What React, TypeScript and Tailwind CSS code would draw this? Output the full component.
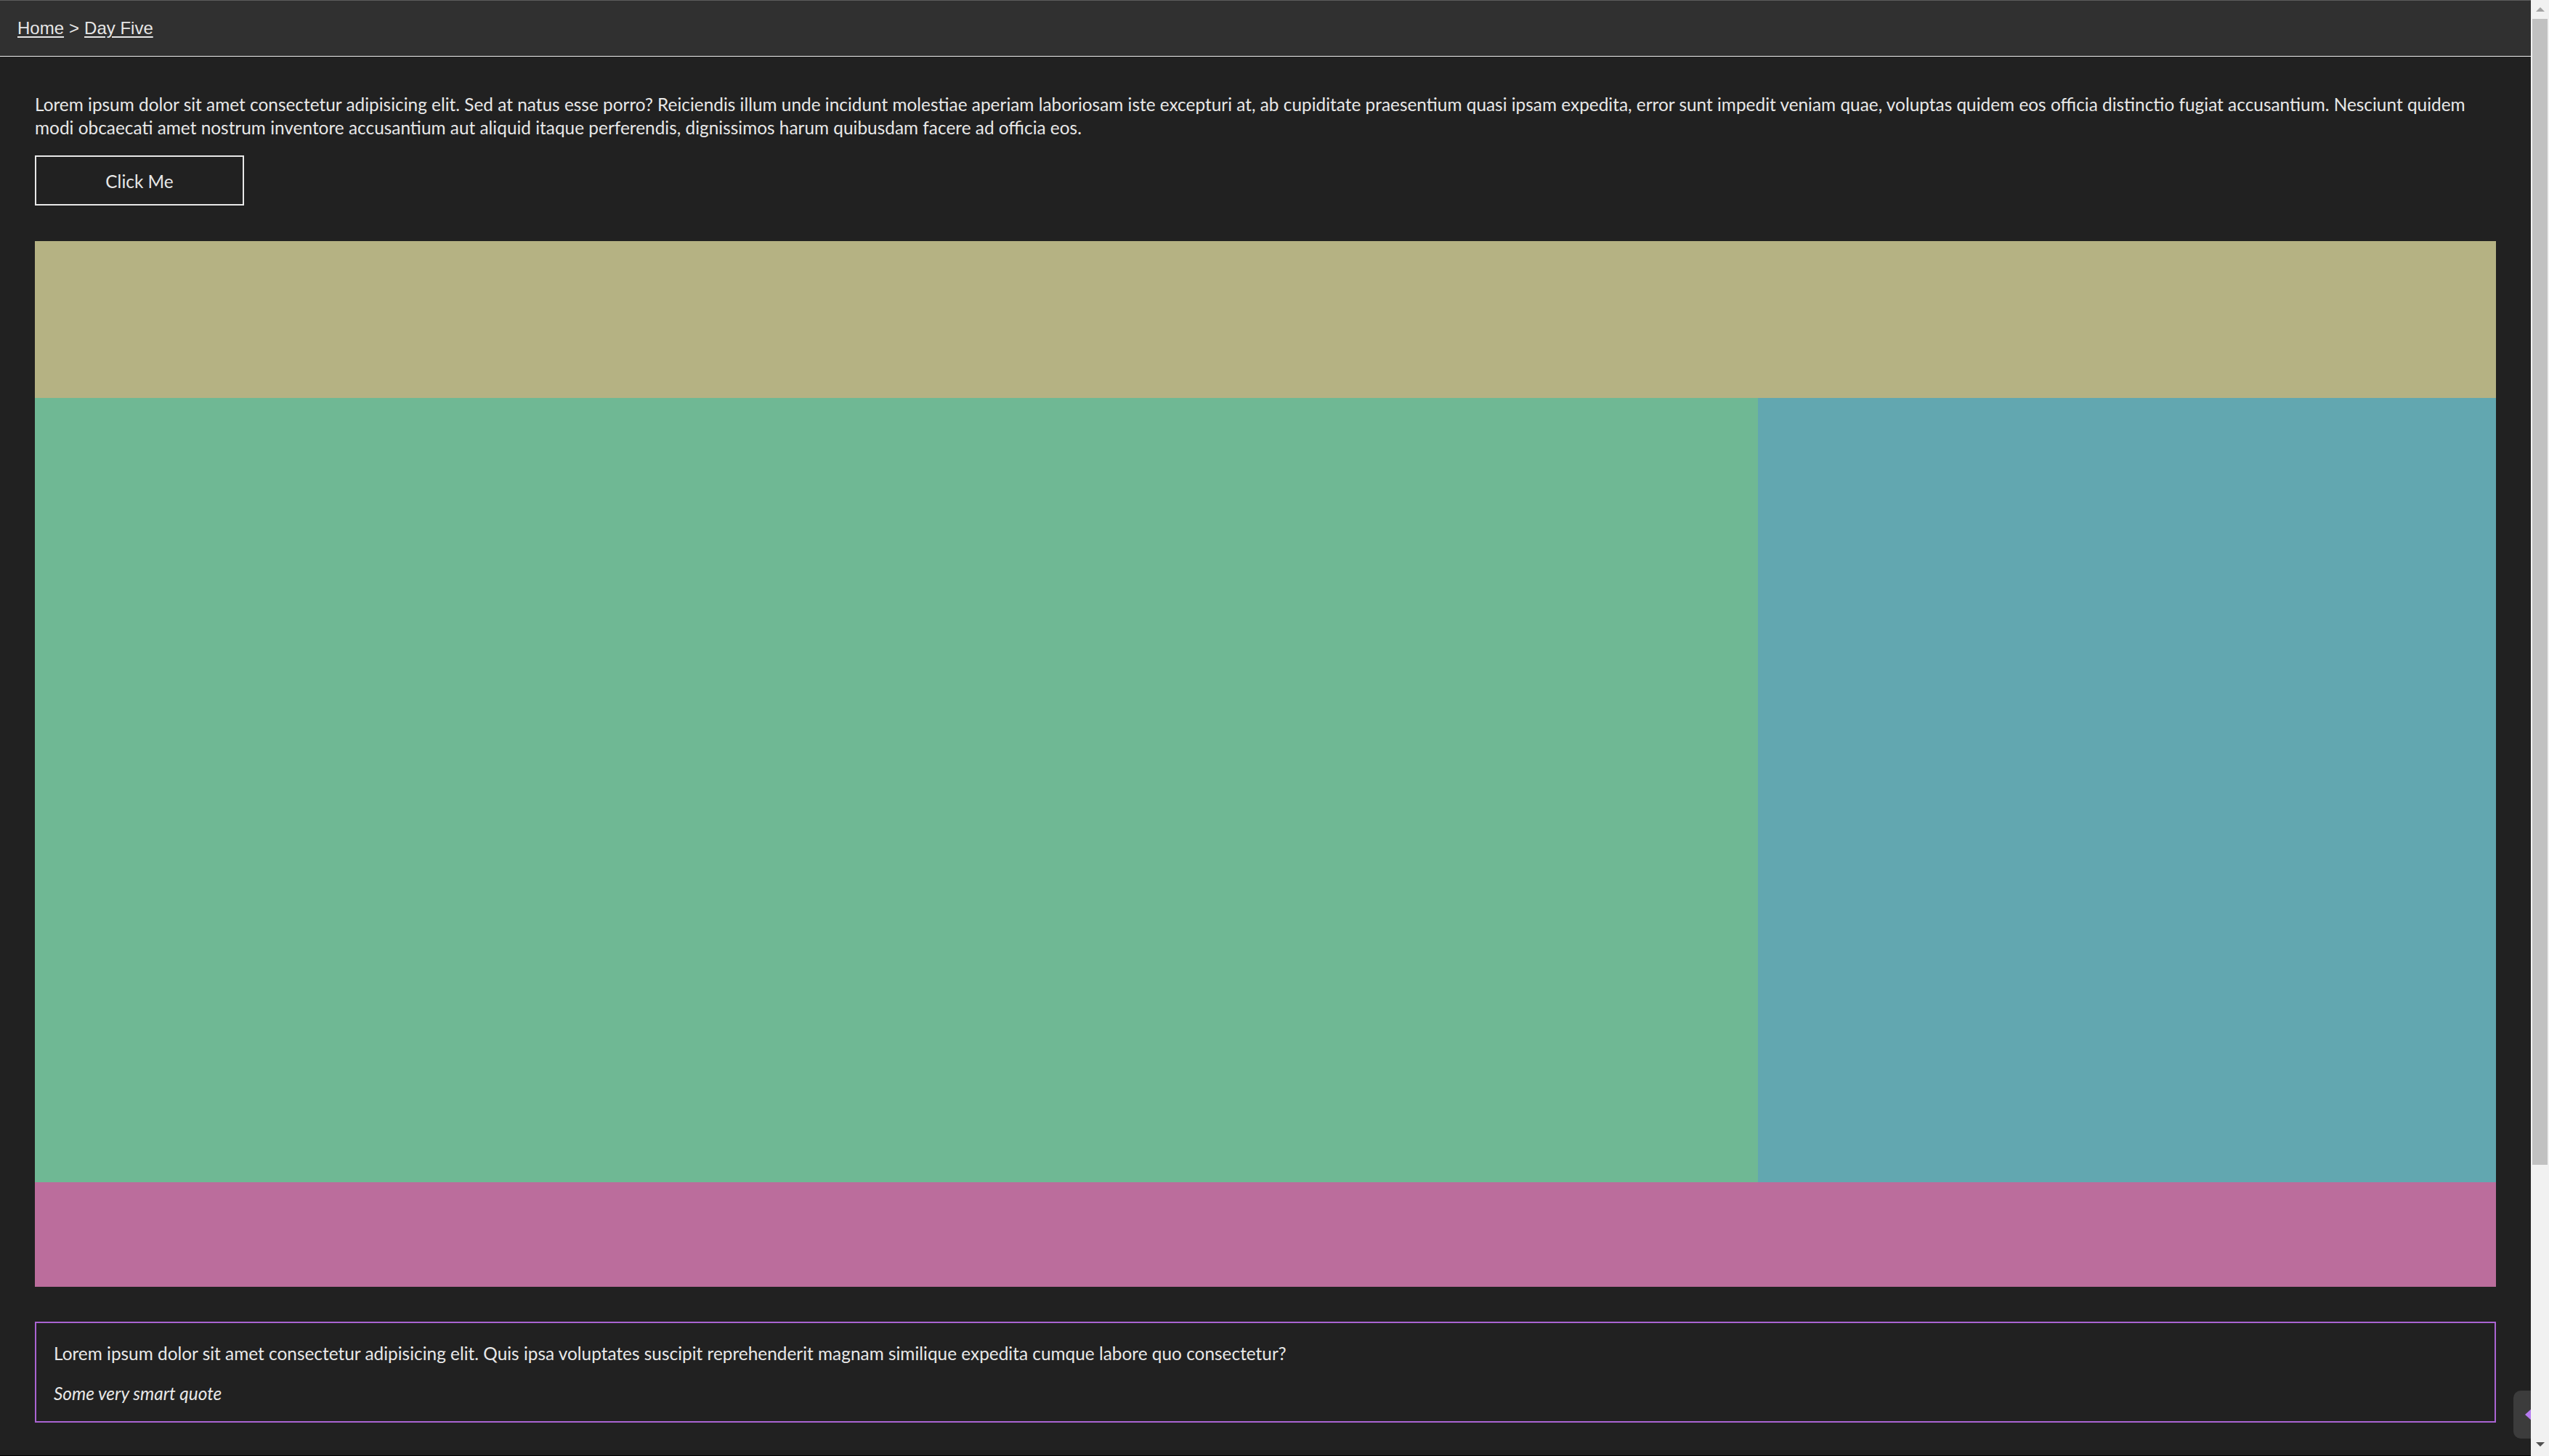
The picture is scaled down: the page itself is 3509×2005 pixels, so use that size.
const loremTop =
  "Lorem ipsum dolor sit amet consectetur adipisicing elit. Sed at natus esse porro? Reiciendis illum unde incidunt molestiae aperiam laboriosam iste excepturi at, ab cupiditate praesentium quasi ipsam expedita, error sunt impedit veniam quae, voluptas quidem eos officia distinctio fugiat accusantium. Nesciunt quidem modi obcaecati amet nostrum inventore accusantium aut aliquid itaque perferendis, dignissimos harum quibusdam facere ad officia eos.";

const loremQuote =
  "Lorem ipsum dolor sit amet consectetur adipisicing elit. Quis ipsa voluptates suscipit reprehenderit magnam similique expedita cumque labore quo consectetur?";

const Breadcrumb = () => {
  return (
    <header className="flex h-[78px] items-center border-t border-b border-t-[#5c5c5c] border-b-[#eeeeee] bg-[#303030] px-6 font-['Liberation_Sans',Arial,sans-serif] text-[24px] text-[#e6e6e6]">
      <a href="#" className="underline underline-offset-[3px]">
        Home
      </a>
      <span className="mx-[7px]">&gt;</span>
      <a href="#" className="underline underline-offset-[3px]">
        Day Five
      </a>
    </header>
  );
};

const Scrollbar = () => {
  return (
    <div className="flex h-screen w-[25px] shrink-0 flex-col bg-[#f1f1f1]">
      <div className="flex h-[26px] items-center justify-center">
        <div className="h-0 w-0 border-x-[6px] border-b-[6px] border-x-transparent border-b-[#a3a3a3]" />
      </div>
      <div className="mx-[2px] h-[1578px] bg-[#c1c1c1]" />
      <div className="flex-1" />
      <div className="flex h-[26px] items-center justify-center pb-[6px]">
        <div className="h-0 w-0 border-x-[6px] border-t-[6px] border-x-transparent border-t-[#505050]" />
      </div>
    </div>
  );
};

export default function App() {
  return (
    <div className="flex h-screen w-full overflow-hidden bg-[#212121] font-['Segoe_UI',Lato,sans-serif] text-[#e8e8e8]">
      <div className="relative flex min-w-0 flex-1 flex-col overflow-hidden border-b border-b-black">
        <Breadcrumb />

        <main className="flex flex-col px-12">
          <p className="mt-[50px] text-[24.4px] leading-[32px]">{loremTop}</p>

          <button className="mt-[22px] h-[69px] w-[288px] border-2 border-[#e8e8e8] pt-[4px] text-[24.4px] text-[#e8e8e8]">
            Click Me
          </button>

          <section className="mt-[49px] grid grid-cols-[7fr_3fr] grid-rows-[216px_1080px_144px]">
            <div className="col-span-2 bg-[#b5b283]" />
            <div className="bg-[#6fb894]" />
            <div className="bg-[#62a7b0]" />
            <div className="col-span-2 bg-[#bb6d9c]" />
          </section>

          <blockquote className="mt-12 flex flex-col gap-[23px] border-2 border-[#aa64d2] px-6 pt-[26px] pb-[22px] text-[24.4px] leading-[32px]">
            <p>{loremQuote}</p>
            <p className="italic">Some very smart quote</p>
          </blockquote>
        </main>

        <div className="absolute top-[1915px] left-[3460px] flex h-[66px] w-[50px] items-center rounded-[10px] bg-[#3c3c3c] pl-[16px]">
          <div className="h-0 w-0 border-y-[9px] border-r-[10px] border-y-transparent border-r-[#b57af0]" />
        </div>
      </div>
      <Scrollbar />
    </div>
  );
}
